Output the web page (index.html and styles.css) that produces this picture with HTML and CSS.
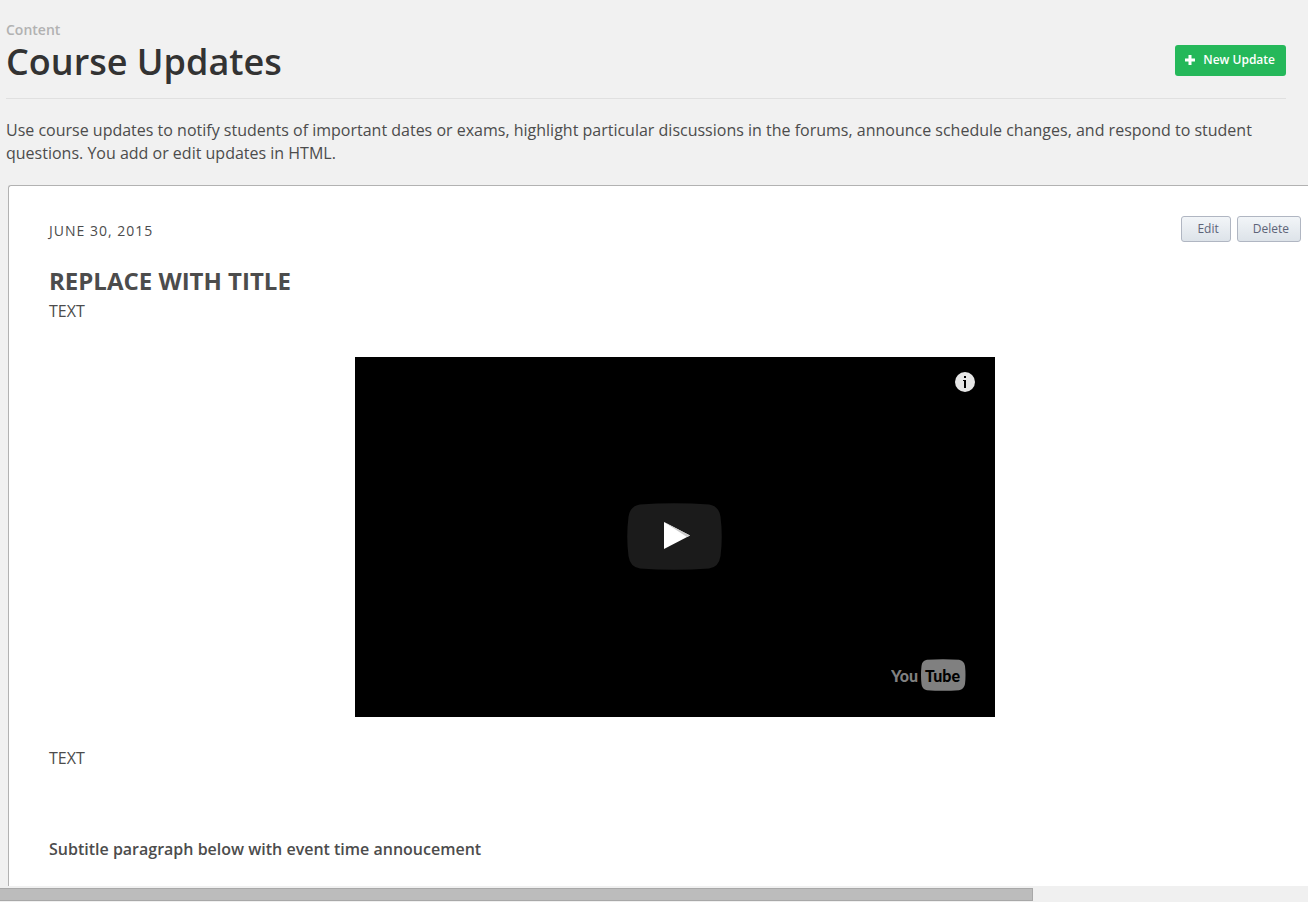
FILE: index.html
```html
<!DOCTYPE html>
<html lang="en">
<head>
<meta charset="utf-8">
<title>Course Updates</title>
<link rel="stylesheet" href="styles.css">
</head>
<body>
<div class="viewport">
  <header class="page-header">
    <h1 class="page-title"><small class="subtitle">Content</small>Course Updates</h1>
    <button class="new-update" type="button">
      <svg width="10" height="10" viewBox="0 0 10 10" aria-hidden="true"><path d="M3.500 0h3v3.500H10v3H6.500V10h-3V6.500H0v-3h3.500z" fill="currentColor"/></svg>
      New Update
    </button>
  </header>
  <p class="intro">Use course updates to notify students of important dates or exams, highlight particular discussions in the forums, announce schedule changes, and respond to student questions. You add or edit updates in HTML.</p>
  <main class="updates">
    <article class="update">
      <div class="update-head">
        <h2 class="date">June 30, 2015</h2>
        <div class="actions">
          <button class="action" type="button">Edit</button>
          <button class="action" type="button">Delete</button>
        </div>
      </div>
      <h3 class="update-title">REPLACE WITH TITLE</h3>
      <p class="text">TEXT</p>
      <div class="video">
        <button class="info" type="button" aria-label="Video information">
          <svg width="20" height="20" viewBox="0 0 20 20"><circle cx="10" cy="10" r="10" fill="#e6e6e6"/><path d="M9 4h2v2H9zM8 8h3v8H9V9H8z" fill="#000"/></svg>
        </button>
        <button class="play" type="button" aria-label="Play">
          <svg width="96" height="68" viewBox="0 0 96 68"><path d="M13 1.500Q47 -1 82 1.500Q92 3 93.500 14Q96 34 93.500 53Q92 64 82 65.500Q47 68 13 65.500Q3 64 1.500 53Q-1 34 1.500 14Q3 3 13 1.500z" fill="#1b1b1b"/><path d="M37 19L63 32.500L37 46z" fill="#fff"/><path d="M37 19L63 32.500L60 34z" fill="#ccc"/></svg>
        </button>
        <svg class="logo" width="75" height="32" viewBox="0 0 75 32" role="img" aria-label="YouTube"><path d="M36 .8Q52 -.5 68 .8Q73 1.500 74 7Q75 16 74 25Q73 30.500 68 31.200Q52 32.500 36 31.200Q31 30.500 30.500 25Q29.500 16 30.500 7Q31 1.500 36 .8z" fill="#808080"/><text class="logo-text" x="0" y="23" fill="#808080">You</text><text class="logo-text" x="34" y="23" fill="#000">Tube</text></svg>
      </div>
      <p class="text">TEXT</p>
      <h4 class="section-title">Subtitle paragraph below with event time annoucement</h4>
    </article>
  </main>
</div>
<div class="scrollbar" aria-hidden="true"><div class="thumb"></div></div>
</body>
</html>
```
FILE: styles.css
```css
* { box-sizing: border-box; }
body {
  margin: 0;
  height: 100vh;
  display: flex;
  flex-direction: column;
  overflow: hidden;
  background: #f1f1f1;
  color: #4c4c4c;
  font: 400 16px/23px "Open Sans", sans-serif;
}
h1, h2, h3, h4, p { margin: 0; }
button { font-family: inherit; cursor: pointer; }
svg { display: block; }
.viewport {
  flex: 1;
  min-height: 0;
  display: flex;
  flex-direction: column;
  overflow: hidden;
}
.page-header {
  display: flex;
  justify-content: space-between;
  align-items: flex-end;
  margin: 20px 22px 0 6px;
  padding-bottom: 14px;
  border-bottom: 1px solid #e0e0e0;
}
.page-title {
  color: #333;
  font-size: 36px;
  line-height: 44px;
  font-weight: 600;
}
.subtitle {
  display: block;
  color: #b2b2b2;
  font-size: 14px;
  line-height: 20px;
}
.new-update {
  display: flex;
  align-items: center;
  gap: 8px;
  margin-bottom: 8px;
  padding: 6px 11px 8px 10px;
  border: 0;
  border-radius: 3px;
  background: #25b85a;
  color: #fff;
  font-size: 12px;
  line-height: 17px;
  font-weight: 600;
}
.intro {
  margin: 20px 22px 20px 6px;
}
.updates {
  flex: 1;
  min-height: 0;
  margin-left: 8px;
  border: 1px solid #b2b2b2;
  border-width: 1px 0 0 1px;
  border-radius: 3px 0 0 0;
  background: #fff;
}
.update { padding: 30px 7px 20px 40px; }
.update-head {
  display: flex;
  justify-content: space-between;
  align-items: flex-start;
}
.date {
  font-size: 14px;
  line-height: 30px;
  font-weight: 500;
  letter-spacing: 1px;
  text-transform: uppercase;
}
.actions { display: flex; gap: 6px; }
.action {
  height: 26px;
  padding: 0 11px 2px 15px;
  border: 1px solid #b0b6c2;
  border-radius: 3px;
  background: linear-gradient(#f2f5f8, #dde3e9);
  color: #5d6478;
  font-size: 12px;
}
.update-title {
  margin-top: 18px;
  font-size: 24px;
  line-height: 34px;
  font-weight: 700;
}
.text { line-height: 26px; }
.video {
  position: relative;
  display: grid;
  place-items: center;
  width: 640px;
  max-width: 100%;
  aspect-ratio: 16 / 9;
  margin: 33px auto 28px;
  background: #000;
}
.info, .play { border: 0; padding: 0; background: none; }
.info { position: absolute; top: 15px; right: 20px; }
.logo { position: absolute; right: 29px; bottom: 26px; }
.logo-text {
  font: 900 16px Lato, sans-serif;
}
.section-title {
  margin-top: 65px;
  font-size: 16px;
  line-height: 26px;
  font-weight: 600;
}
.scrollbar {
  height: 16px;
  padding: 2px 0 1px;
  background: #f0f0f0;
}
.thumb {
  width: 79%;
  height: 13px;
  border: 1px solid #a8a8a8;
  border-left: 0;
  background: #bcbcbc;
}
```
